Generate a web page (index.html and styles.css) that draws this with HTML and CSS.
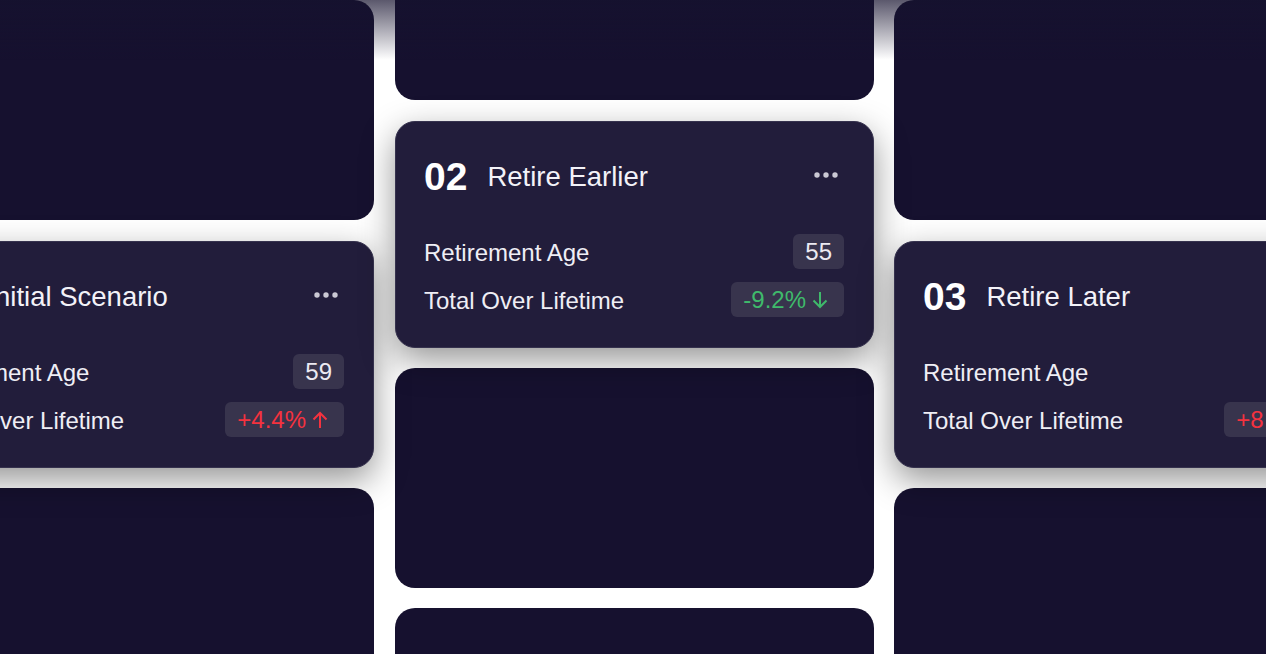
FILE: index.html
```html
<!DOCTYPE html>
<html lang="en">
<head>
    <meta charset="UTF-8">
    <meta name="viewport" content="width=device-width, initial-scale=1.0">
    <title>Scenarios</title>
    <link rel="stylesheet" href="styles.css">
</head>
<body>
    <!-- Scenario board -->
    <div class="board">
        <!-- Column 1 -->
        <div class="column">
            <div class="card"></div>
            <div class="card scenario">
                <div class="scenario-head">
                    <span class="scenario-num">01</span>
                    <span class="scenario-title">Initial Scenario</span>
                    <svg class="dots" width="24" height="6" viewBox="0 0 24 6"><circle cx="3" cy="3" r="2.7"/><circle cx="12" cy="3" r="2.7"/><circle cx="21" cy="3" r="2.7"/></svg>
                </div>
                <div class="scenario-rows">
                    <div class="row">
                        <span class="label">Retirement Age</span>
                        <span class="pill">59</span>
                    </div>
                    <div class="row">
                        <span class="label">Total Over Lifetime</span>
                        <span class="pill change up">+4.4%
                            <svg width="16" height="18" viewBox="0 0 16 18"><path d="M8 17V2M1.5 8.5L8 2l6.5 6.5"/></svg>
                        </span>
                    </div>
                </div>
            </div>
            <div class="card"></div>
        </div>

        <!-- Column 2 -->
        <div class="column shifted">
            <div class="card"></div>
            <div class="card scenario">
                <div class="scenario-head">
                    <span class="scenario-num">02</span>
                    <span class="scenario-title">Retire Earlier</span>
                    <svg class="dots" width="24" height="6" viewBox="0 0 24 6"><circle cx="3" cy="3" r="2.7"/><circle cx="12" cy="3" r="2.7"/><circle cx="21" cy="3" r="2.7"/></svg>
                </div>
                <div class="scenario-rows">
                    <div class="row">
                        <span class="label">Retirement Age</span>
                        <span class="pill">55</span>
                    </div>
                    <div class="row">
                        <span class="label">Total Over Lifetime</span>
                        <span class="pill change down">-9.2%
                            <svg width="16" height="18" viewBox="0 0 16 18"><path d="M8 1v15M1.5 9.5L8 16l6.5-6.5"/></svg>
                        </span>
                    </div>
                </div>
            </div>
            <div class="card"></div>
            <div class="card"></div>
        </div>

        <!-- Column 3 -->
        <div class="column">
            <div class="card"></div>
            <div class="card scenario">
                <div class="scenario-head">
                    <span class="scenario-num">03</span>
                    <span class="scenario-title">Retire Later</span>
                    <svg class="dots" width="24" height="6" viewBox="0 0 24 6"><circle cx="3" cy="3" r="2.7"/><circle cx="12" cy="3" r="2.7"/><circle cx="21" cy="3" r="2.7"/></svg>
                </div>
                <div class="scenario-rows">
                    <div class="row">
                        <span class="label">Retirement Age</span>
                        <span class="pill">63</span>
                    </div>
                    <div class="row">
                        <span class="label">Total Over Lifetime</span>
                        <span class="pill change up">+8.1%
                            <svg width="16" height="18" viewBox="0 0 16 18"><path d="M8 17V2M1.5 8.5L8 2l6.5 6.5"/></svg>
                        </span>
                    </div>
                </div>
            </div>
            <div class="card"></div>
        </div>
    </div>
</body>
</html>
```

FILE: styles.css
```css
/* General styling */
body {
    margin: 0;
    height: 654px;
    overflow: hidden;
    background-color: #ffffff;
    font-family: "Liberation Sans", Arial, sans-serif;
    color: #f3f2f8;
}
/* Dark fade along the top edge */
body::before {
    content: "";
    position: fixed;
    top: 0;
    left: 0;
    right: 0;
    height: 60px;
    background: linear-gradient(rgba(22, 18, 47, 0.7), rgba(22, 18, 47, 0));
    pointer-events: none;
    z-index: 5;
}
/* Board of cards */
.board {
    display: flex;
    gap: 21px;
    margin-left: -105px;
}
.column {
    display: flex;
    flex-direction: column;
    gap: 20px;
    width: 479px;
    flex-shrink: 0;
}
.column.shifted {
    margin-top: -120px;
}
.column:last-child {
    margin-left: -1px;
}
.card {
    height: 220px;
    flex-shrink: 0;
    border-radius: 20px;
    background-color: #16112f;
    box-sizing: border-box;
}
/* Highlighted scenario card */
.card.scenario {
    position: relative;
    z-index: 2;
    height: 227px;
    margin-top: 1px;
    padding: 29px 29px 30px 28px;
    display: flex;
    flex-direction: column;
    background-color: #221d3b;
    border: 1.5px solid #36324e;
    box-shadow: 0 12px 34px rgba(0, 0, 0, 0.42);
}
.scenario-head {
    display: flex;
    align-items: center;
    height: 50px;
}
.scenario-num {
    font-size: 39px;
    font-weight: bold;
    color: #ffffff;
    margin-right: 20px;
    margin-top: 1px;
}
.scenario-title {
    font-size: 27.5px;
    flex: 1;
    margin-top: 1px;
}
.dots {
    fill: #cbc9d4;
    margin-right: 6px;
    margin-top: -2px;
}
.scenario-rows {
    margin-top: auto;
    display: flex;
    flex-direction: column;
    gap: 13px;
}
.row {
    display: flex;
    align-items: center;
    justify-content: space-between;
    height: 35px;
}
.label {
    font-size: 24px;
    color: #efeef5;
    margin-top: 3px;
}
.pill {
    display: inline-flex;
    align-items: center;
    gap: 6px;
    height: 35px;
    padding: 0 12px;
    border-radius: 6px;
    background-color: #38344d;
    font-size: 24px;
    color: #eceaf2;
}
.pill.change {
    padding: 0 16px 0 12px;
}
.pill svg {
    fill: none;
    stroke: currentColor;
    stroke-width: 2;
}
.pill.down {
    color: #3fba6b;
}
.pill.up {
    color: #f5323f;
}
```
